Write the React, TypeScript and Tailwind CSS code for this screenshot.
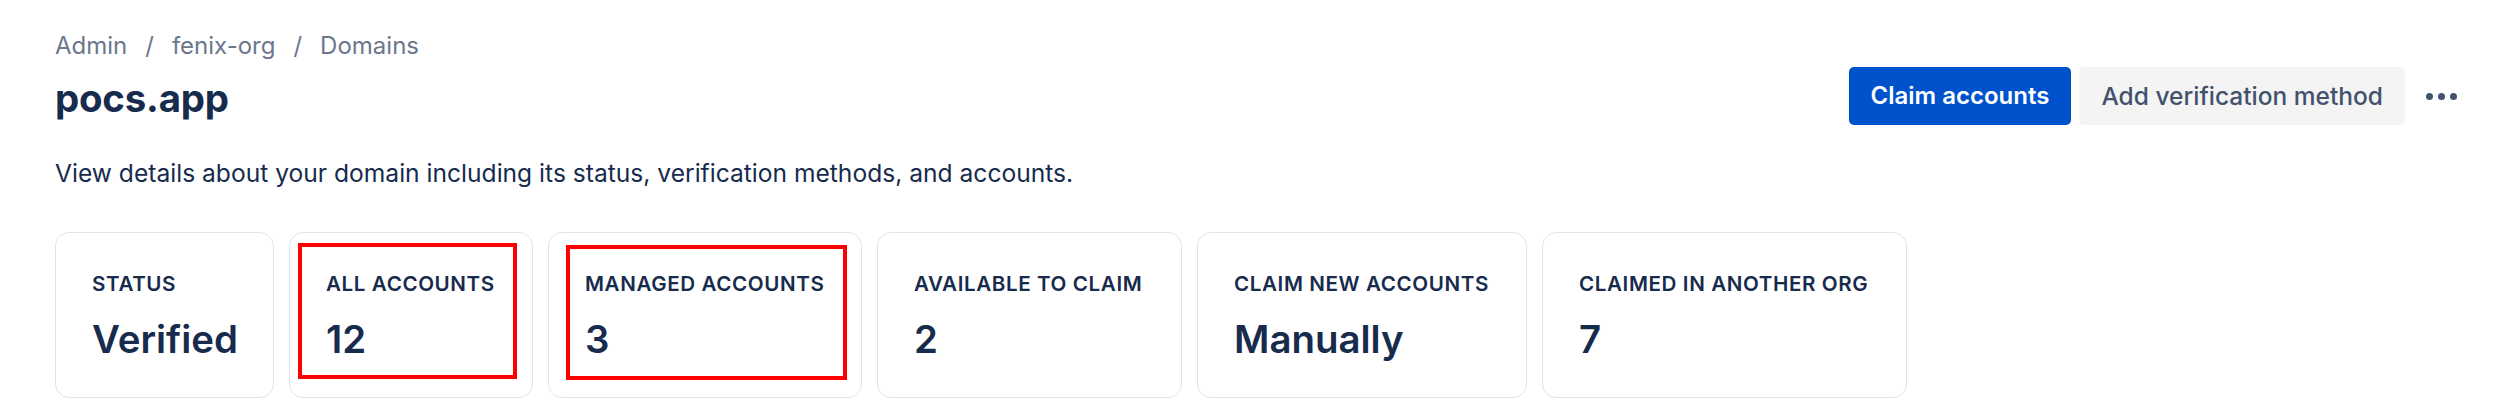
import React from 'react';

const STATS = [
    { label: 'STATUS', value: 'Verified', width: 'w-[219px]' },
    { label: 'ALL ACCOUNTS', value: '12', width: 'w-[244px]', mark: 'left-[8px] top-[10px] w-[219px] h-[136px]' },
    { label: 'MANAGED ACCOUNTS', value: '3', width: 'w-[314px]', mark: 'left-[17px] top-[12px] w-[281px] h-[135px]' },
    { label: 'AVAILABLE TO CLAIM', value: '2', width: 'w-[305px]' },
    { label: 'CLAIM NEW ACCOUNTS', value: 'Manually', width: 'w-[330px]' },
    { label: 'CLAIMED IN ANOTHER ORG', value: '7', width: 'w-[365px]' },
];

const App = () => {
    return (
        <div className="w-full h-[416px] bg-white pl-[55px] pr-[29px] font-['Inter','Liberation_Sans',sans-serif] text-[#172b4d] overflow-hidden">
            {/* breadcrumb */}
            <nav className="pt-[30px] flex items-center text-[24px] leading-[32px] text-[#6b778c]">
                <span>Admin</span>
                <span className="px-[18px]">/</span>
                <span>fenix-org</span>
                <span className="px-[18px]">/</span>
                <span>Domains</span>
            </nav>

            <div className="mt-[5px] flex items-center justify-between">
                <h1 className="pt-[4px] text-[38.4px] leading-[54px] font-bold tracking-[-0.2px]">pocs.app</h1>
                <div className="flex items-center gap-2">
                    <button className="h-[58px] px-[22px] rounded-[5px] bg-[#0052cc] text-white text-[24px] font-semibold">
                        Claim accounts
                    </button>
                    <button className="h-[58px] px-[22px] rounded-[5px] bg-[#f4f4f4] text-[#42526e] text-[24.5px] font-medium">
                        Add verification method
                    </button>
                    <button className="h-[58px] w-[56px] flex items-center justify-center gap-[5px]" aria-label="More">
                        <span className="w-[7px] h-[7px] rounded-full bg-[#42526e]" />
                        <span className="w-[7px] h-[7px] rounded-full bg-[#42526e]" />
                        <span className="w-[7px] h-[7px] rounded-full bg-[#42526e]" />
                    </button>
                </div>
            </div>

            <p className="mt-[32px] text-[24.6px] leading-[32px]">
                View details about your domain including its status, verification methods, and accounts.
            </p>

            <div className="mt-[43px] flex gap-[15px]">
                {STATS.map((stat) => (
                    <div
                        key={stat.label}
                        className={`relative ${stat.width} h-[166px] shrink-0 rounded-[14px] border border-[#e2e3e6] pl-[36px] pt-[38px]`}
                    >
                        <div className="text-[20.6px] leading-[25px] font-semibold tracking-[0.6px] whitespace-nowrap">
                            {stat.label}
                        </div>
                        <div className="mt-[19px] text-[38.4px] leading-[48px] font-semibold">{stat.value}</div>
                        {stat.mark && (
                            <div className={`absolute ${stat.mark} border-[4px] border-[#ff0000] pointer-events-none`} />
                        )}
                    </div>
                ))}
            </div>
        </div>
    );
};

export default App;
